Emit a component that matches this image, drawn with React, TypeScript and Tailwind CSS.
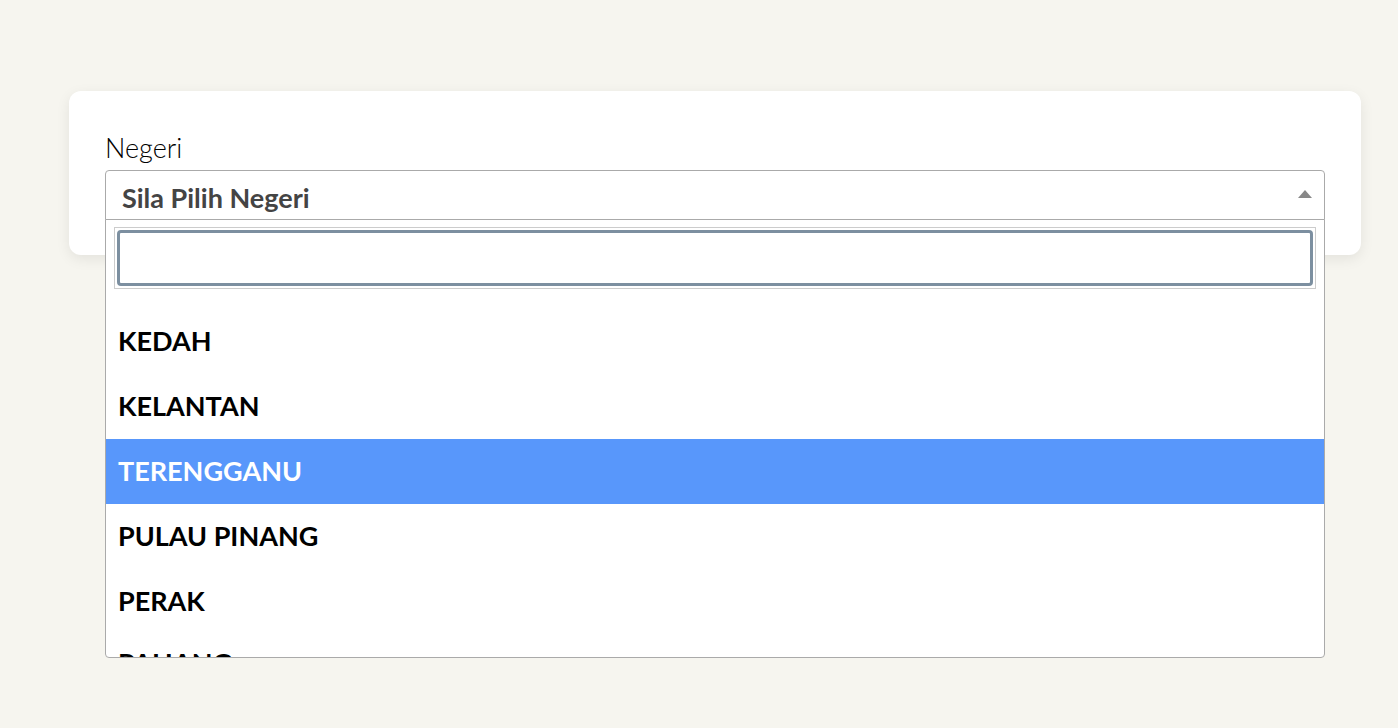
const states = ["KEDAH", "KELANTAN", "TERENGGANU", "PULAU PINANG", "PERAK", "PAHANG"];

export default function App() {
  return (
    <div className="min-h-screen bg-[#f6f5ef] pt-[91px] px-[69px] font-['Lato',sans-serif]">
      <div className="relative w-[1292px] h-[164px] bg-white rounded-xl shadow-[0_4px_14px_rgba(0,0,0,0.08)] px-9 pt-[40px]">
        <label className="block mb-[5px] text-[27px] leading-[34px] font-light text-black">Negeri</label>
        <div className="relative w-[1220px]">
          <div className="h-[50px] border border-[#aaa] rounded-t bg-white flex items-center justify-between pl-4 pr-[12px]">
            <span className="text-[27px] font-bold text-[#444] mt-[6px]">Sila Pilih Negeri</span>
            <span className="w-0 h-0 border-x-[7px] border-x-transparent border-b-[8px] border-b-[#888] mt-[-2px]" />
          </div>
          <div className="absolute left-0 top-[49px] w-full h-[439px] border border-[#aaa] rounded-b bg-white overflow-hidden z-10">
            <div className="mx-2 mt-[7px] border border-[#ccc] p-[2px]">
              <input className="block w-full h-[56px] border-[3px] border-[#7c8fa0] rounded outline-none" />
            </div>
            <ul className="mt-[20px]">
              {states.map((s) => (
                <li
                  key={s}
                  className={
                    s === "TERENGGANU"
                      ? "h-[65px] flex items-center px-3 text-[27px] font-bold bg-[#5897fb] text-white"
                      : s === "PAHANG"
                        ? "h-[65px] flex items-center px-3 pb-[6px] text-[27px] font-bold text-black"
                        : "h-[65px] flex items-center px-3 text-[27px] font-bold text-black"
                  }
                >
                  {s}
                </li>
              ))}
            </ul>
          </div>
        </div>
      </div>
    </div>
  );
}
